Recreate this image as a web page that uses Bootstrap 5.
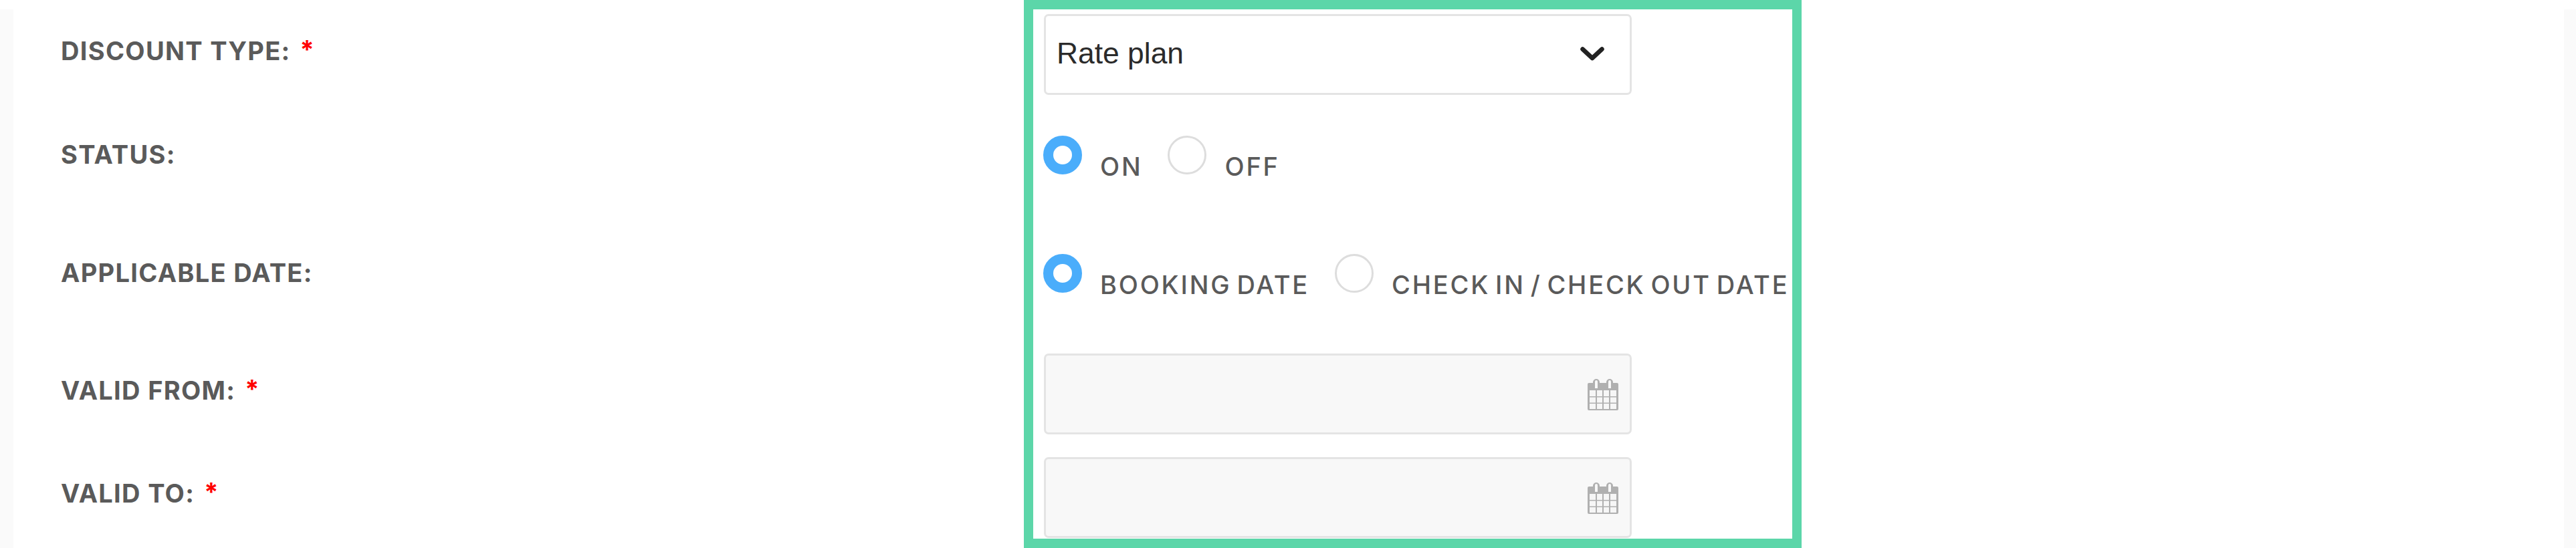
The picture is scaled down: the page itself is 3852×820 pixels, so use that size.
<!DOCTYPE html>
<html lang="en">
<head>
<meta charset="utf-8">
<title>Discount form</title>
<link href="https://cdn.jsdelivr.net/npm/bootstrap@5.3.0/dist/css/bootstrap.min.css" rel="stylesheet">
<style>
html,body{background:#fff;margin:0;overflow:hidden}
.page-frame{width:3852px;height:820px;padding-top:14px;background:#fff}
.page-sheet{height:806px;background:#fff;border-left:20px solid #fafafa;border-right:18px solid #fafafa;position:relative}
.form-shell{position:absolute;top:-14px;left:0;right:0;height:820px}
.label-col{width:1511px;padding-left:71px;font-family:Inter,"Liberation Sans",sans-serif;font-weight:700;font-size:38px;letter-spacing:1.3px;color:#5a5a5a}
.label-row{display:flex;align-items:center;gap:14px;line-height:44px;white-space:nowrap}
.req{color:#f00;font-size:38px;align-self:flex-start;margin-top:-2px}
.lr1{height:44px;margin-top:54px}
.lr2{height:44px;margin-top:111px}
.lr3{height:44px;margin-top:133px}
.lr4{height:44px;margin-top:132px}
.lr5{height:44px;margin-top:110px}
.green-box{width:1163px;height:820px;border:14px solid #5cd6a9;padding:7px 0 0 15px;flex:none;background:#fff}
.field-box{width:879px;height:121px;margin-left:1px;border:3px solid #e4e4e4;border-radius:7px;display:flex;align-items:center;justify-content:space-between}
.select-box{background:#fff;padding:0 38px 0 16px;font-family:"Liberation Sans",sans-serif;font-size:44.4px;color:#2b2b2b;line-height:1}
.select-box svg{margin-top:-2px}
.select-box span{margin-top:-3px}
.date-box{background:#f8f8f8;padding:0 17px 0 0;justify-content:flex-end}
.radio-row{display:flex;align-items:flex-start;height:60px;font-family:Inter,"Liberation Sans",sans-serif;font-weight:500;font-size:38px;letter-spacing:2.8px;word-spacing:-5px;color:#5a5a5a;white-space:nowrap}
.rr1{margin-top:61px}
.rr2{margin-top:117px}
.rr-text{margin-top:27px;margin-left:27px;line-height:38px}
.radio-on,.radio-off{width:58px;height:58px;border-radius:50%;flex:none;background:#fff}
.radio-on{border:15.5px solid #4aadfb}
.radio-off{border:3px solid #ddd;margin-left:38px}
.date1{margin-top:89px}
.date2{margin-top:34px}
.date-box svg{margin-top:2px}
</style>
</head>
<body>
<div class="page-frame">
  <div class="page-sheet">
    <div class="form-shell d-flex">
      <div class="label-col d-flex flex-column">
        <div class="label-row lr1"><span>DISCOUNT TYPE:</span><span class="req">*</span></div>
        <div class="label-row lr2"><span>STATUS:</span></div>
        <div class="label-row lr3"><span>APPLICABLE DATE:</span></div>
        <div class="label-row lr4"><span>VALID FROM:</span><span class="req">*</span></div>
        <div class="label-row lr5"><span>VALID TO:</span><span class="req">*</span></div>
      </div>
      <div class="green-box">
        <div class="field-box select-box">
          <span>Rate plan</span>
          <svg width="36" height="22" viewBox="0 0 36 22" aria-hidden="true"><path d="M3.5 3.5 18 17 32.5 3.5" fill="none" stroke="#222" stroke-width="6.5" stroke-linecap="round" stroke-linejoin="round"/></svg>
        </div>
        <div class="radio-row rr1">
          <span class="radio-on"></span><span class="rr-text">ON</span>
          <span class="radio-off"></span><span class="rr-text">OFF</span>
        </div>
        <div class="radio-row rr2">
          <span class="radio-on"></span><span class="rr-text">BOOKING DATE</span>
          <span class="radio-off"></span><span class="rr-text">CHECK IN / CHECK OUT DATE</span>
        </div>
        <div class="field-box date-box date1">
          <svg width="46" height="47" viewBox="0 0 46 47" aria-hidden="true"><use href="#cal"/></svg>
        </div>
        <div class="field-box date-box date2">
          <svg width="46" height="47" viewBox="0 0 46 47" aria-hidden="true"><use href="#cal"/></svg>
        </div>
      </div>
    </div>
  </div>
</div>
<svg width="0" height="0" class="d-block" aria-hidden="true"><defs><g id="cal">
  <path fill="#b0b0b0" d="M2 6h6V5a5 5 0 0 1 10 0v1h10V5a5 5 0 0 1 10 0v1h6a2 2 0 0 1 2 2v37a2 2 0 0 1-2 2H2a2 2 0 0 1-2-2V8a2 2 0 0 1 2-2z"/>
  <path fill="#f8f8f8" d="M11 4a2 2 0 0 1 4 0v10h-4zM31 4a2 2 0 0 1 4 0v10h-4z"/>
  <path fill="#f6f6f6" d="M3 17h9v9H3zM14 17h8v9h-8zM24 17h8v9h-8zM34 17h9v9h-9zM3 27.5h9v8H3zM14 27.5h8v8h-8zM24 27.5h8v8h-8zM34 27.5h9v8h-9zM3 37h9v8H3zM14 37h8v8h-8zM24 37h8v8h-8zM34 37h9v8h-9z"/>
</g></defs></svg>
<script src="https://cdn.jsdelivr.net/npm/bootstrap@5.3.0/dist/js/bootstrap.bundle.min.js"></script>
</body>
</html>
